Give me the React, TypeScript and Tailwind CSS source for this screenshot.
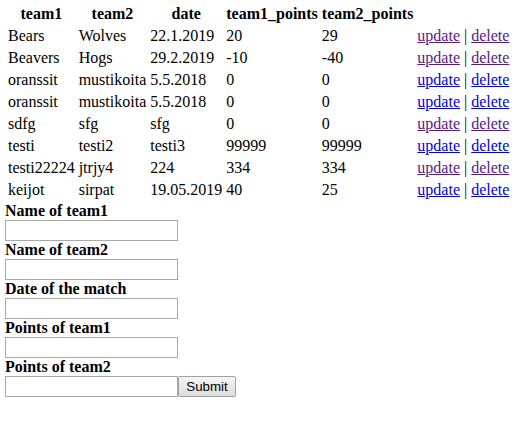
const rows = [
  { t1: 'Bears', t2: 'Wolves', date: '22.1.2019', p1: '20', p2: '29', up: true, del: true },
  { t1: 'Beavers', t2: 'Hogs', date: '29.2.2019', p1: '-10', p2: '-40', up: true, del: true },
  { t1: 'oranssit', t2: 'mustikoita', date: '5.5.2018', p1: '0', p2: '0', up: false, del: false },
  { t1: 'oranssit', t2: 'mustikoita', date: '5.5.2018', p1: '0', p2: '0', up: false, del: false },
  { t1: 'sdfg', t2: 'sfg', date: 'sfg', p1: '0', p2: '0', up: true, del: true },
  { t1: 'testi', t2: 'testi2', date: 'testi3', p1: '99999', p2: '99999', up: false, del: false },
  { t1: 'testi22224', t2: 'jtrjy4', date: '224', p1: '334', p2: '334', up: true, del: true },
  { t1: 'keijot', t2: 'sirpat', date: '19.05.2019', p1: '40', p2: '25', up: false, del: false },
];

const fields = ['Name of team1', 'Name of team2', 'Date of the match', 'Points of team1', 'Points of team2'];

function Input() {
  return <input type="text" className="h-[21px] w-[173px] border border-[#a9a9a9] bg-white px-[2px] outline-none" />;
}

export default function App() {
  return (
    <div
      className="min-h-screen bg-white pl-[5px] pt-[2px] text-[16px] leading-[18px] text-black"
      style={{ fontFamily: '"Liberation Serif", "Times New Roman", serif' }}
    >
      <table className="border-separate border-spacing-[2px]">
        <thead>
          <tr>
            <th className="p-[1px] text-center font-bold">team1</th>
            <th className="p-[1px] text-center font-bold">team2</th>
            <th className="p-[1px] text-center font-bold">date</th>
            <th className="p-[1px] text-center font-bold">team1_points</th>
            <th className="p-[1px] text-center font-bold">team2_points</th>
            <th className="p-[1px]"></th>
          </tr>
        </thead>
        <tbody>
          {rows.map((r, i) => (
            <tr key={i}>
              <td className="p-[1px]">{r.t1}</td>
              <td className="p-[1px]">{r.t2}</td>
              <td className="p-[1px]">{r.date}</td>
              <td className="p-[1px]">{r.p1}</td>
              <td className="p-[1px]">{r.p2}</td>
              <td className="p-[1px]">
                <a href="#" className={r.up ? 'text-[#551a8b] underline' : 'text-[#0000ee] underline'}>update</a>
                {' | '}
                <a href="#" className={r.del ? 'text-[#551a8b] underline' : 'text-[#0000ee] underline'}>delete</a>
              </td>
            </tr>
          ))}
        </tbody>
      </table>
      <form className="flex flex-col items-start" onSubmit={(e) => e.preventDefault()}>
        {fields.map((f, i) => (
          <div key={f} className="flex flex-col items-start">
            <label className="font-bold">{f}</label>
            {i < fields.length - 1 ? (
              <Input />
            ) : (
              <div className="flex">
                <Input />
                <button
                  type="submit"
                  className="h-[21px] w-[58px] rounded-[2px] border border-[#a0a0a0] bg-gradient-to-b from-[#f6f6f6] to-[#dddddd] text-[13.33px] leading-none text-black"
                  style={{ fontFamily: '"Liberation Sans", Arial, sans-serif' }}
                >
                  Submit
                </button>
              </div>
            )}
          </div>
        ))}
      </form>
    </div>
  );
}
